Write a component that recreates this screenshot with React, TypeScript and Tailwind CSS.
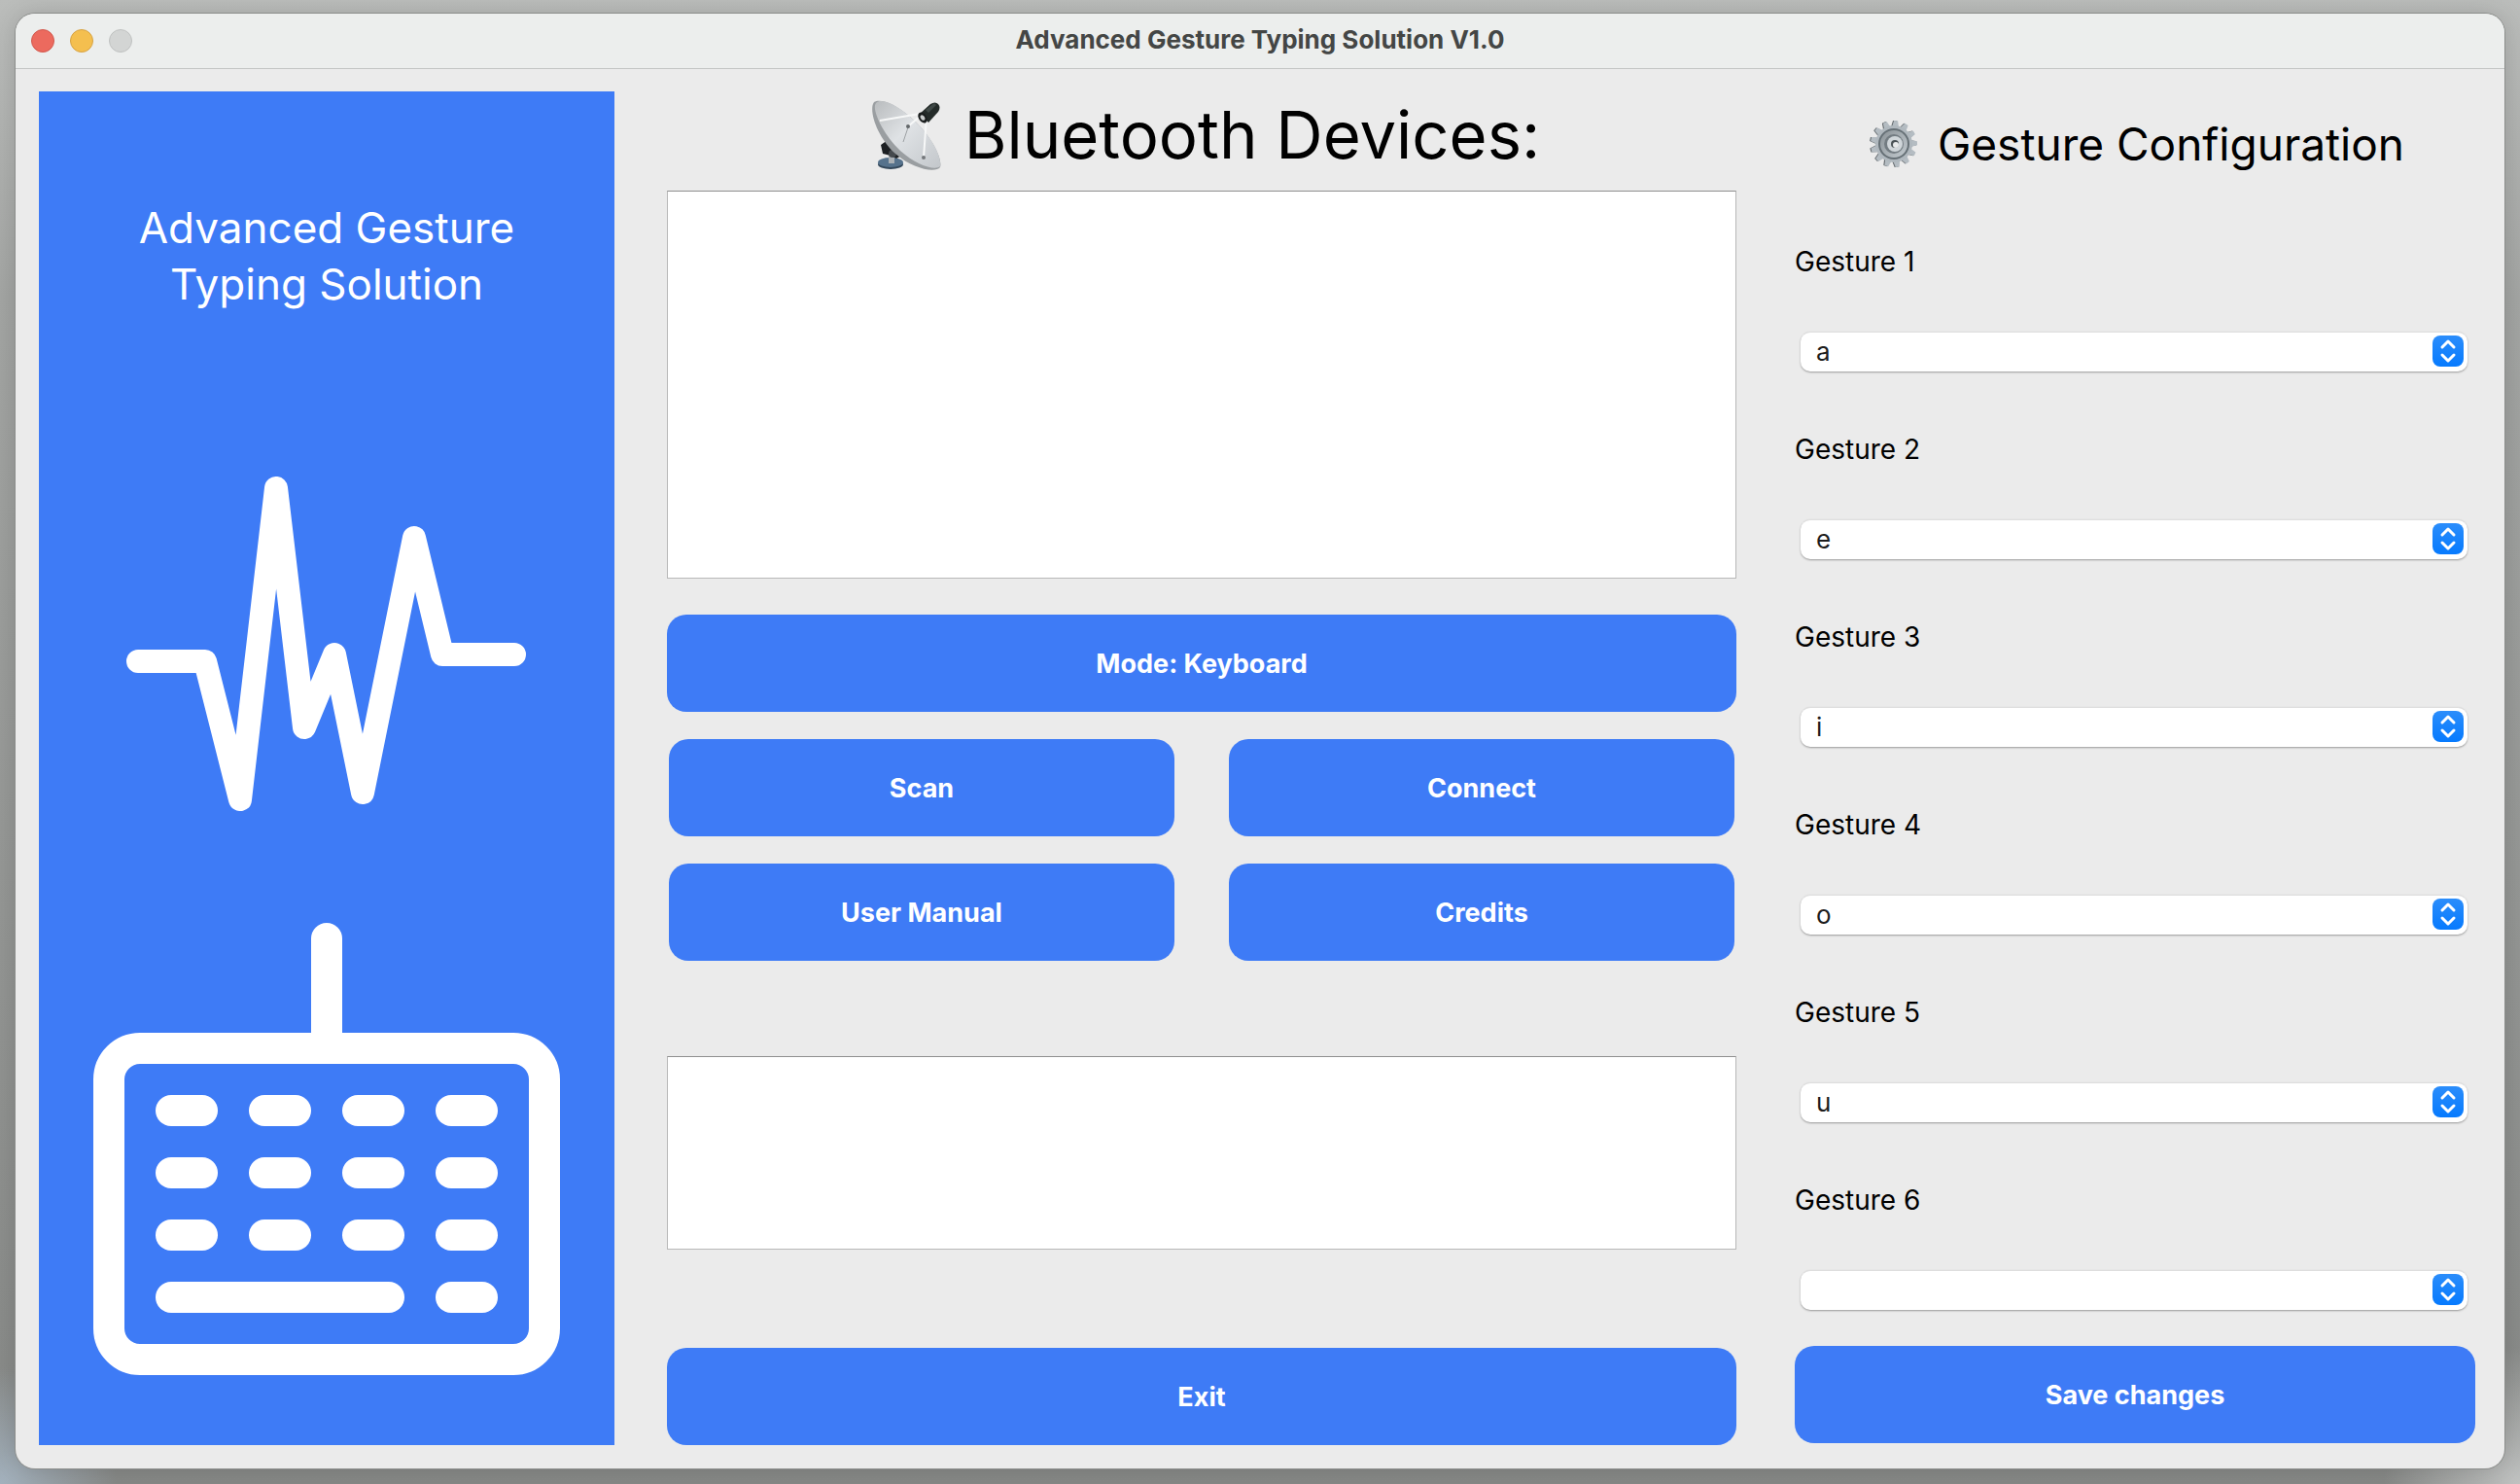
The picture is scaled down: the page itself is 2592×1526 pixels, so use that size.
import { useId, useState } from "react";

const LETTERS = ["", "a", "e", "i", "o", "u"];
const GESTURES = [
  { name: "Gesture 1", value: "a" },
  { name: "Gesture 2", value: "e" },
  { name: "Gesture 3", value: "i" },
  { name: "Gesture 4", value: "o" },
  { name: "Gesture 5", value: "u" },
  { name: "Gesture 6", value: "" },
];

function ActionButton({ label }: { label: string }) {
  return (
    <button
      type="button"
      className="h-[100px] w-full shrink-0 rounded-[20px] bg-[#3e7bf6] pt-[2px] text-[27px] leading-8 font-bold text-white"
    >
      {label}
    </button>
  );
}

function Waveform() {
  return (
    <svg viewBox="130 490 412 344" className="w-[412px]" fill="none" aria-hidden="true">
      <path
        d="M142 680H211L247 822L284 502L313 748L344 673L373 815L426 553L455 673H529"
        stroke="#fff"
        strokeWidth="24"
        strokeLinecap="round"
        strokeLinejoin="round"
      />
    </svg>
  );
}

function KeyboardLogo() {
  const columns = [64, 160, 256, 352];
  const rows = [177, 241, 305];
  return (
    <svg viewBox="0 0 480 465" className="w-[480px]" fill="#fff" aria-hidden="true">
      <path d="M224 120V16a16 16 0 0 1 32 0V120Z" />
      <rect x="16" y="129" width="448" height="320" rx="32" fill="none" stroke="#fff" strokeWidth="32" />
      {rows.map((y) =>
        columns.map((x) => <rect key={`${x}-${y}`} x={x} y={y} width="64" height="32" rx="16" />),
      )}
      <rect x="64" y="369" width="256" height="32" rx="16" />
      <rect x="352" y="369" width="64" height="32" rx="16" />
    </svg>
  );
}

function SatelliteDish() {
  return (
    <svg viewBox="0 0 72 74" className="w-[72px] shrink-0" aria-hidden="true">
      <defs>
        <linearGradient id="dish" x1="0" y1="0" x2="1" y2="1">
          <stop offset="0" stopColor="#b9bcbe" />
          <stop offset="0.45" stopColor="#dfe2e5" />
          <stop offset="1" stopColor="#c3c7cb" />
        </linearGradient>
      </defs>
      <ellipse cx="20" cy="67" rx="13" ry="5" fill="#33475a" />
      <ellipse cx="20" cy="65" rx="13" ry="5" fill="#56728c" />
      <path d="M18 50h6v16h-6z" fill="#aab0b5" />
      <path d="M10 47l7-5 12 8 4 7-7 4-6-3-8-2z" fill="#1c1f22" />
      <circle cx="22" cy="56" r="4" fill="#45494d" />
      <path d="M3 3C-3 11 6 39 25 56C43 72 66 76 71 70C74 60 60 35 40 18C24 4 9-1 3 3Z" fill="#9a9ea1" />
      <path d="M5 4C0 10 12 36 30 53C47 68 66 74 71 69C73 58 60 35 40 18C24 4 10-1 5 4Z" fill="url(#dish)" />
      <path d="M9 22l41-7M57 18l-3 42M52 16L38 28" fill="none" stroke="#f7f8f8" strokeWidth="2" />
      <path d="M38 29l-5 15" stroke="#9da1a4" strokeWidth="1" />
      <circle cx="38" cy="28" r="2" fill="#63676a" />
      <circle cx="54" cy="60" r="2" fill="#74787b" />
      <path d="M50 15L61 5Q66 2 69 5Q72 8 69 13L59 24Z" fill="#242b29" />
      <path d="M56 11l9-7 2 2-8 8z" fill="#3f4846" />
      <ellipse cx="53" cy="19" rx="4" ry="6" transform="rotate(-35 53 19)" fill="#1a1d1d" />
      <ellipse cx="53" cy="19" rx="2" ry="3" transform="rotate(-35 53 19)" fill="#c9cccc" />
    </svg>
  );
}

function Gear() {
  const teeth = Array.from({ length: 13 }, (_, i) => (i * 360) / 13 + 5);
  return (
    <svg viewBox="0 0 50 50" className="w-[50px] shrink-0" aria-hidden="true">
      <defs>
        <linearGradient id="steel" x1="0" y1="0" x2="1" y2="1">
          <stop offset="0" stopColor="#8b9398" />
          <stop offset="1" stopColor="#c3cacf" />
        </linearGradient>
      </defs>
      <g fill="#5c6266">
        {teeth.map((a) => (
          <path key={a} d="M20 10L22 1H26L28 10Z" transform={`rotate(${a} 24 25)`} />
        ))}
      </g>
      <g fill="#b4bcc2">
        {teeth.map((a) => (
          <path key={a} d="M21 10L23 1H27L29 10Z" transform={`rotate(${a} 25 25)`} />
        ))}
      </g>
      <circle cx="25" cy="25" r="19" fill="#b0b8be" />
      <circle cx="25" cy="25" r="16" fill="#667076" />
      <circle cx="25" cy="25" r="14" fill="url(#steel)" />
      <circle cx="25" cy="25" r="10" fill="#737c82" />
      <circle cx="26" cy="25" r="8" fill="#d0d6da" />
      <circle cx="26" cy="25" r="4" fill="#4a5256" />
      <circle cx="27" cy="26" r="3" fill="#e8eaeb" />
    </svg>
  );
}

function GestureField({ name, value }: { name: string; value: string }) {
  const id = useId();
  const [letter, setLetter] = useState(value);
  return (
    <div className="flex flex-col gap-[54px]">
      <label htmlFor={id} className="text-[28px] leading-9">
        {name}
      </label>
      <div className="relative mr-2 ml-[6px]">
        <select
          id={id}
          value={letter}
          onChange={(e) => setLetter(e.target.value)}
          className="block h-[41px] w-full appearance-none rounded-[10px] border-t border-[#dedede] bg-white px-4 text-[26px] leading-8 text-[#1d1d1d] shadow-[0_1px_2px_rgba(0,0,0,0.35)]"
        >
          {LETTERS.map((l) => (
            <option key={l} value={l}>
              {l}
            </option>
          ))}
        </select>
        <svg viewBox="0 0 32 32" className="pointer-events-none absolute top-1 right-1 w-8" aria-hidden="true">
          <defs>
            <linearGradient id="stepper" x1="0" y1="0" x2="0" y2="1">
              <stop offset="0" stopColor="#2b8dfb" />
              <stop offset="1" stopColor="#067afe" />
            </linearGradient>
          </defs>
          <rect width="32" height="32" rx="8" fill="url(#stepper)" />
          <path
            d="M10 12L16 6L22 12M10 20L16 26L22 20"
            fill="none"
            stroke="#fff"
            strokeWidth="3"
            strokeLinecap="round"
            strokeLinejoin="round"
          />
        </svg>
      </div>
    </div>
  );
}

export default function App() {
  return (
    <div className="flex min-h-screen flex-col bg-[radial-gradient(circle_at_0%_100%,#a3b1bd_0,transparent_120px),radial-gradient(circle_at_100%_100%,#c0c2c1_0,transparent_140px),linear-gradient(to_bottom,#bbbdbb,#a3a5a3_20%,#868886)] px-4 pt-[14px] pb-4 font-[Inter,sans-serif] text-black">
      <div className="flex flex-1 flex-col overflow-hidden rounded-[20px] bg-[#ebebeb] shadow-[0_0_0_1px_#8b8d8b,0_0_24px_rgba(0,0,0,0.15)]">
        <header className="relative flex h-[57px] shrink-0 items-center justify-center border-b border-[#c4c6c5] bg-[#eceeed]">
          <div className="absolute left-4 flex gap-4">
            <button type="button" aria-label="Close" className="size-6 rounded-full border border-[#d1574c] bg-[#ec6a5e]" />
            <button type="button" aria-label="Minimize" className="size-6 rounded-full border border-[#d6a243] bg-[#f4bf4f]" />
            <button type="button" aria-label="Zoom" disabled className="size-6 rounded-full border border-[#bfc1c0] bg-[#d3d5d4]" />
          </div>
          <h1 className="pb-[2px] text-[26px] leading-8 font-bold text-[#444645]">Advanced Gesture Typing Solution V1.0</h1>
        </header>

        <main className="grid flex-1 grid-cols-[592fr_1100fr_706fr] gap-x-[54px] pt-[23px] pr-[30px] pb-6 pl-6">
          <aside className="flex flex-col items-center bg-[#3e7bf6] pb-[72px] text-white">
            <h2 className="mt-[111px] w-[420px] text-center text-[44px] leading-[58px]">Advanced Gesture Typing Solution</h2>
            <div className="mt-[169px] flex flex-1 flex-col items-center justify-between">
              <Waveform />
              <KeyboardLogo />
            </div>
          </aside>

          <section className="flex flex-col">
            <h2 className="flex h-[102px] shrink-0 items-center justify-center gap-6 pb-3 pl-2 text-[67px] leading-[84px]">
              <SatelliteDish />
              Bluetooth Devices:
            </h2>
            <ul role="listbox" aria-label="Bluetooth devices" className="h-[399px] border border-[#b8b8b8] border-t-[#8f8f8f] bg-white" />
            <div className="mt-[37px]">
              <ActionButton label="Mode: Keyboard" />
            </div>
            <div className="mt-7 grid grid-cols-2 gap-x-14 gap-y-7 px-[2px]">
              <ActionButton label="Scan" />
              <ActionButton label="Connect" />
              <ActionButton label="User Manual" />
              <ActionButton label="Credits" />
            </div>
            <textarea
              aria-label="Log output"
              readOnly
              className="mt-[98px] h-[199px] w-full resize-none border border-[#b8b8b8] border-t-[#8f8f8f] bg-white"
            />
            <div className="mt-auto">
              <ActionButton label="Exit" />
            </div>
          </section>

          <section className="flex flex-col pb-[2px] pl-[6px]">
            <h2 className="mt-6 flex h-[60px] shrink-0 items-center justify-center gap-5 pl-1 text-[46px] leading-[60px]">
              <Gear />
              Gesture Configuration
            </h2>
            <div className="mt-[73px] flex flex-col gap-[62px]">
              {GESTURES.map((g) => (
                <GestureField key={g.name} name={g.name} value={g.value} />
              ))}
            </div>
            <div className="mt-auto">
              <ActionButton label="Save changes" />
            </div>
          </section>
        </main>
      </div>
    </div>
  );
}
